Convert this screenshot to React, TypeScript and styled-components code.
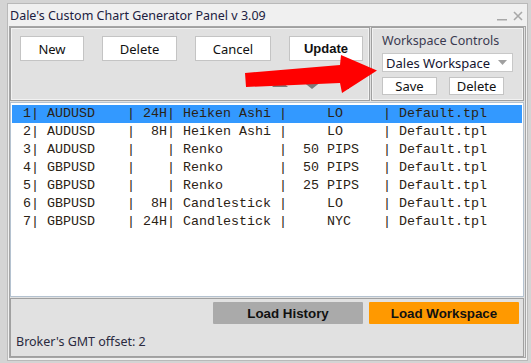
import React from 'react'
import styled, { createGlobalStyle } from 'styled-components'

const GlobalStyle = createGlobalStyle`
  html, body {
    margin: 0;
    padding: 0;
    background: #d4d4d4;
    width: 531px;
    height: 363px;
    overflow: hidden;
  }
  * { box-sizing: border-box; }
`

const uiFont = `"Noto Sans", "DejaVu Sans", sans-serif`
const boldFont = `"Liberation Sans", Arial, sans-serif`

const Window = styled.div`
  position: relative;
  margin: 3px 3px 0 7px;
  height: 358px;
  background: #f0f0f0;
  border: 1px solid #b9b9b9;
  display: flex;
  flex-direction: column;
  font-family: ${uiFont};
  color: #1a1a3a;
`

const TitleBar = styled.div`
  height: 22px;
  display: flex;
  align-items: center;
  padding: 1px 4px 0 2px;
  font-size: 12.5px;
  color: #202040;
`

const TitleText = styled.span`
  flex: 1;
`

const TitleIcon = styled.svg`
  margin-left: 6px;
`

const Frame = styled.div`
  flex: 1;
  margin: 0 1px 2px 1px;
  border: 1px solid #a5a5a5;
  background: #e1e1e1;
  display: flex;
  flex-direction: column;
`

const TopRow = styled.div`
  display: flex;
  height: 74px;
`

const Panel = styled.div<{ $width?: number }>`
  ${(p) => (p.$width ? `width: ${p.$width}px;` : 'flex: 1;')}
  border: 1px solid #a0a0a0;
  box-shadow: inset 0 0 0 1px #f2f2f2;
  margin-right: 1px;
  background: #e1e1e1;
`

const ButtonRow = styled.div`
  display: flex;
  gap: 18px;
  padding: 8px 0 0 9px;
`

const Button = styled.button<{ $width: number; $bold?: boolean }>`
  width: ${(p) => p.$width}px;
  height: 25px;
  background: #ffffff;
  border: 1px solid #c4c4c4;
  font-family: ${(p) => (p.$bold ? boldFont : uiFont)};
  font-weight: ${(p) => (p.$bold ? 700 : 400)};
  font-size: 13px;
  color: #111;
  padding: 0;
`

const WsInner = styled.div`
  padding: 4px 0 0 10px;
  display: flex;
  flex-direction: column;
`

const WsLabel = styled.div`
  font-size: 12.5px;
  color: #3a3a50;
  height: 21px;
  line-height: 18px;
`

const Select = styled.div`
  width: 131px;
  height: 19px;
  background: #fff;
  border: 1px solid #c8c8c8;
  display: flex;
  align-items: center;
  justify-content: space-between;
  padding: 0 5px 0 3px;
  font-size: 13px;
  color: #151530;
`

const SmallRow = styled.div`
  display: flex;
  gap: 12px;
  margin-top: 5px;
`

const SmallButton = styled.button`
  width: 55px;
  height: 18px;
  background: #fff;
  border: 1px solid #c4c4c4;
  font-family: ${uiFont};
  font-size: 13px;
  color: #111;
  padding: 0;
  line-height: 14px;
`

const List = styled.div`
  height: 195px;
  margin: 1px 1px 0 0;
  background: #fff;
  border: 1px solid #b4c2d0;
  padding: 2px 1px;
`

const Row = styled.div<{ $selected?: boolean }>`
  height: 18px;
  line-height: 18px;
  padding-left: 11px;
  background: ${(p) => (p.$selected ? '#3399ff' : 'transparent')};
  font-family: "Liberation Mono", "Courier New", monospace;
  font-size: 13.33px;
  color: #2a2214;
  white-space: pre;
`

const Bottom = styled.div`
  flex: 1;
  margin: 1px 1px 0 0;
  border: 1px solid #a0a0a0;
  display: flex;
  flex-direction: column;
`

const LoadRow = styled.div`
  display: flex;
  justify-content: flex-end;
  gap: 6px;
  padding: 3px 4px 0 0;
`

const LoadButton = styled.button<{ $bg: string }>`
  width: 150px;
  height: 22px;
  background: ${(p) => p.$bg};
  border: none;
  border-radius: 1px;
  font-family: ${boldFont};
  font-weight: 700;
  font-size: 13.33px;
  color: #111;
  padding: 0;
`

const Offset = styled.div`
  margin: 9px 0 0 5px;
  font-size: 12.5px;
  color: #2a2a40;
`

const Overlay = styled.svg`
  position: absolute;
  left: -8px;
  top: -4px;
  pointer-events: none;
`

type Chart = { pair: string; tf: string; type: string; box: string }

const charts: Chart[] = [
  { pair: 'AUDUSD', tf: '24H', type: 'Heiken Ashi', box: 'LO' },
  { pair: 'AUDUSD', tf: '8H', type: 'Heiken Ashi', box: 'LO' },
  { pair: 'AUDUSD', tf: '', type: 'Renko', box: '50 PIPS' },
  { pair: 'GBPUSD', tf: '', type: 'Renko', box: '50 PIPS' },
  { pair: 'GBPUSD', tf: '', type: 'Renko', box: '25 PIPS' },
  { pair: 'GBPUSD', tf: '8H', type: 'Candlestick', box: 'LO' },
  { pair: 'GBPUSD', tf: '24H', type: 'Candlestick', box: 'NYC' },
]

const boxCell = (box: string) => {
  if (box.includes('PIPS')) return ('  ' + box).padEnd(12)
  return ('     ' + box).padEnd(12)
}

const line = (c: Chart, i: number) =>
  `${i + 1}| ${c.pair.padEnd(9)} | ${c.tf.padStart(3)}| ${c.type.padEnd(11)} |${boxCell(c.box)}| Default.tpl`

export default function App() {
  return (
    <>
      <GlobalStyle />
      <Window>
        <TitleBar>
          <TitleText>Dale's Custom Chart Generator Panel v 3.09</TitleText>
          <TitleIcon width="10" height="10" viewBox="0 0 10 10">
            <rect x="0" y="8" width="10" height="1.5" fill="#a8a8a8" />
          </TitleIcon>
          <TitleIcon width="10" height="10" viewBox="0 0 10 10">
            <path d="M1 1 L9 9 M9 1 L1 9" stroke="#a8a8a8" strokeWidth="1.6" />
          </TitleIcon>
        </TitleBar>
        <Frame>
          <TopRow>
            <Panel>
              <ButtonRow>
                <Button $width={64}>New</Button>
                <Button $width={75}>Delete</Button>
                <Button $width={76}>Cancel</Button>
                <Button $width={74} $bold>Update</Button>
              </ButtonRow>
            </Panel>
            <Panel $width={153}>
              <WsInner>
                <WsLabel>Workspace Controls</WsLabel>
                <Select>
                  <span>Dales Workspace</span>
                  <svg width="9" height="5" viewBox="0 0 9 5">
                    <path d="M0 0 L9 0 L4.5 5 Z" fill="#a0a0a0" />
                  </svg>
                </Select>
                <SmallRow>
                  <SmallButton>Save</SmallButton>
                  <SmallButton>Delete</SmallButton>
                </SmallRow>
              </WsInner>
            </Panel>
          </TopRow>
          <List>
            {charts.map((c, i) => (
              <Row key={i} $selected={i === 0}>
                {line(c, i)}
              </Row>
            ))}
          </List>
          <Bottom>
            <LoadRow>
              <LoadButton $bg="#aaaaaa">Load History</LoadButton>
              <LoadButton $bg="#ff9900">Load Workspace</LoadButton>
            </LoadRow>
            <Offset>Broker's GMT offset: 2</Offset>
          </Bottom>
        </Frame>
        <Overlay width="531" height="363" viewBox="0 0 531 363">
          <path d="M272 87 L280 80 L288 87 Z" fill="#7a7a7a" />
          <path d="M302 81 L322 81 L312 89 Z" fill="#7a7a7a" />
          <rect x="346" y="84" width="3" height="5" fill="#555" />
          <path
            d="M245 73 L340 65 L341 55 L377 70.5 L342 93 L340 83 L246 87 Z"
            fill="#ff0000"
          />
        </Overlay>
      </Window>
    </>
  )
}
